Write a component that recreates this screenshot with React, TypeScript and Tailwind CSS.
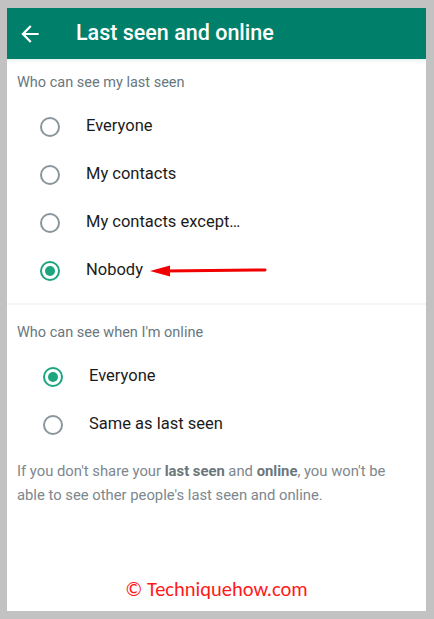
import React from "react";

function Radio({ checked }: { checked?: boolean }) {
  return checked ? (
    <div className="flex h-5 w-5 shrink-0 items-center justify-center rounded-full border-2 border-[#1da57f]">
      <div className="h-[10px] w-[10px] rounded-full bg-[#1da57f]" />
    </div>
  ) : (
    <div className="h-5 w-5 shrink-0 rounded-full border-2 border-[#8a969c]" />
  );
}

function Option({
  label,
  checked,
  arrow,
  indent,
}: {
  label: string;
  checked?: boolean;
  arrow?: boolean;
  indent?: boolean;
}) {
  return (
    <div className={`flex h-12 items-center ${indent ? "pl-[36px]" : "pl-[33px]"}`}>
      <Radio checked={checked} />
      <span className="ml-[26px] text-[16.5px] text-[#1b1b1b]">{label}</span>
      {arrow && (
        <svg width="118" height="14" viewBox="0 0 118 14" className="ml-[7px]">
          <line x1="14" y1="7" x2="115" y2="6" stroke="#f00000" strokeWidth="3" strokeLinecap="round" />
          <polygon points="0,7 20,1.5 20,12.5" fill="#f00000" />
        </svg>
      )}
    </div>
  );
}

export default function App() {
  return (
    <div
      className="flex h-[619px] w-[434px] bg-[#c2c2c2] pb-[8px] pl-[7px] pr-[8px] pt-[8px]"
      style={{ fontFamily: "Roboto, 'Noto Sans', sans-serif" }}
    >
      <div className="flex flex-1 flex-col bg-white">
        <div className="flex h-[51px] items-center bg-[#00806a] pl-[10px]">
          <svg width="26" height="26" viewBox="0 0 24 24">
            <path
              d="M20 11H7.83l5.59-5.59L12 4l-8 8 8 8 1.41-1.41L7.83 13H20v-2z"
              fill="white"
            />
          </svg>
          <span className="ml-[33px] text-[21.5px] font-medium text-white">Last seen and online</span>
        </div>
        <div className="h-[4px] bg-gradient-to-b from-[#e6f2ef] to-white" />
        <div className="pl-[10px] pt-[9px] text-[14.5px] text-[#687780]">Who can see my last seen</div>
        <div className="mt-[9px]">
          <Option label="Everyone" />
          <Option label="My contacts" />
          <Option label="My contacts except…" />
          <Option label="Nobody" checked arrow />
        </div>
        <div className="mt-[8px] h-[2px] bg-[#f3f4f4]" />
        <div className="pl-[10px] pt-[17px] text-[14.5px] text-[#687780]">Who can see when I'm online</div>
        <div className="mt-[9px]">
          <Option label="Everyone" checked indent />
          <Option label="Same as last seen" indent />
        </div>
        <p className="mt-[10px] pl-[10px] pr-[30px] text-[14.8px] leading-[24px] text-[#7d878d]">
          If you don't share your <b className="font-bold text-[#6b767c]">last seen</b> and{" "}
          <b className="font-bold text-[#6b767c]">online</b>, you won't be able to see other people's last seen and
          online.
        </p>
        <div className="flex flex-1 items-end justify-center pb-[6px]">
          <span
            className="text-[20.5px] text-[#ff1a1a]"
            style={{ fontFamily: "Carlito, 'Open Sans', sans-serif" }}
          >
            © Techniquehow.com
          </span>
        </div>
      </div>
    </div>
  );
}
